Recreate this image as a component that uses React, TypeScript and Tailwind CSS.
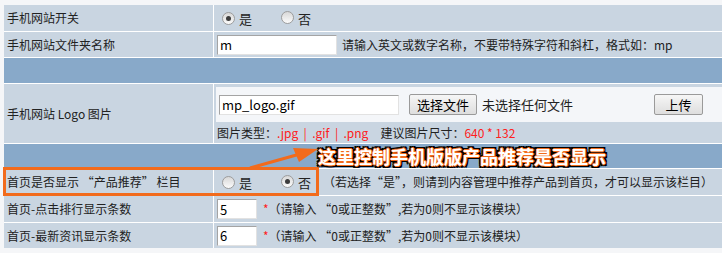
import React from "react"

function Radio({ checked }: { checked?: boolean }) {
  return (
    <span className="relative inline-block h-[13px] w-[13px] shrink-0 rounded-full border border-[#9c9c9c] bg-linear-to-b from-[#d8d8d8] to-[#fbfbfb]">
      {checked && <span className="absolute left-[3px] top-[3px] h-[5px] w-[5px] rounded-full bg-[#3c3c3c]" />}
    </span>
  )
}

function Field({ value, width }: { value: string; width: string }) {
  return (
    <span
      className={`flex h-[20px] items-center border border-[#a4a4a4] border-r-[#e2e2e2] border-b-[#e2e2e2] bg-white pl-[2px] text-[13px] leading-none text-black ${width}`}
    >
      {value}
    </span>
  )
}

function Btn({ children }: { children: React.ReactNode }) {
  return (
    <span className="flex h-[21px] items-center justify-center rounded-[2px] border border-[#9a9a9a] bg-linear-to-b from-[#f6f6f6] to-[#dedede] text-[13px] leading-none text-black">
      {children}
    </span>
  )
}

function Row({ label, h, children }: { label: React.ReactNode; h: string; children?: React.ReactNode }) {
  return (
    <div className={`flex gap-px ${h}`}>
      <div className="flex w-[209px] items-center bg-[#c9d5e1] pl-[3px]">{label}</div>
      <div className="flex min-w-0 flex-1 items-center whitespace-nowrap bg-[#c9d5e1]">{children}</div>
    </div>
  )
}

export default function App() {
  return (
    <div className="relative h-[253px] w-[722px] overflow-hidden bg-[#f5f6f8] pt-[5px] pl-[4px] font-['Noto_Sans_CJK_SC',sans-serif] text-[12px] leading-none text-[#222]">
      <div className="flex w-[718px] flex-col gap-px bg-white">
        <Row label="手机网站开关" h="h-[26px]">
          <div className="flex items-center pl-[8px]">
            <Radio checked />
            <span className="ml-[4px] text-[13px]">是</span>
            <span className="ml-[29px]"><Radio /></span>
            <span className="ml-[4px] text-[13px]">否</span>
          </div>
        </Row>
        <Row label="手机网站文件夹名称" h="h-[25px]">
          <div className="flex items-center pl-[3px]">
            <Field value="m" width="w-[120px]" />
            <span className="ml-[5px]">请输入英文或数字名称，不要带特殊字符和斜杠，格式如：mp</span>
          </div>
        </Row>
        <div className="h-[25px] bg-[#88a9c9]" />
        <Row label="手机网站 Logo 图片" h="h-[59px]">
          <div className="flex h-full w-full flex-col pl-[2px] pt-[3px]">
            <div className="flex h-[35px] items-center bg-[#f4f6f9] pl-[3px] pr-[19px]">
              <Field value="mp_logo.gif" width="w-[180px]" />
              <span className="ml-[10px] w-[68px]"><Btn>选择文件</Btn></span>
              <span className="ml-[5px] text-[13px]">未选择任何文件</span>
              <span className="ml-auto w-[49px]"><Btn>上传</Btn></span>
            </div>
            <div className="flex flex-1 items-center pl-[1px] text-[12px]">
              <span>图片类型：</span>
              <span className="text-[#ff2020]">.jpg&nbsp;&nbsp;|&nbsp;&nbsp;.gif&nbsp;&nbsp;|&nbsp;&nbsp;.png</span>
              <span className="ml-[12px]">建议图片尺寸：</span>
              <span className="text-[#ff2020]">640&nbsp;*&nbsp;132</span>
            </div>
          </div>
        </Row>
        <div className="h-[24px] bg-[#88a9c9]" />
        <Row label="首页是否显示 “产品推荐” 栏目" h="h-[26px]">
          <div className="flex items-center pl-[8px]">
            <Radio />
            <span className="ml-[4px] text-[13px]">是</span>
            <span className="ml-[29px]"><Radio checked /></span>
            <span className="ml-[4px] text-[13px]">否</span>
            <span className="ml-[12px]">（若选择“是”，则请到内容管理中推荐产品到首页，才可以显示该栏目）</span>
          </div>
        </Row>
        <Row label="首页-点击排行显示条数" h="h-[26px]">
          <div className="flex items-center pl-[3px]">
            <Field value="5" width="w-[40px]" />
            <span className="ml-[6px] text-[#ff2020]">*</span>
            <span>（请输入 “0或正整数”,若为0则不显示该模块）</span>
          </div>
        </Row>
        <Row label="首页-最新资讯显示条数" h="h-[25px]">
          <div className="flex items-center pl-[3px]">
            <Field value="6" width="w-[40px]" />
            <span className="ml-[6px] text-[#ff2020]">*</span>
            <span>（请输入 “0或正整数”,若为0则不显示该模块）</span>
          </div>
        </Row>
      </div>

      {/* annotation overlay */}
      <div className="absolute left-[3px] top-[167px] h-[29px] w-[316px] border-[3px] border-[#f26b1c]" />
      <svg className="absolute left-0 top-0" width="722" height="253" viewBox="0 0 722 253">
        <line x1="250" y1="168" x2="300" y2="154" stroke="#f26b1c" strokeWidth="3" />
        <polygon points="318,149 293,148 299,162" fill="#f26b1c" />
      </svg>
      <span className="absolute left-[318px] top-[145px] text-[18px] font-bold leading-[22px] text-white [text-shadow:1px_0_0_#f26b1c,-1px_0_0_#f26b1c,0_1px_0_#f26b1c,0_-1px_0_#f26b1c,2px_0_0_#000,-2px_0_0_#000,0_2px_0_#000,0_-2px_0_#000,2px_2px_0_#000,-2px_-2px_0_#000,2px_-2px_0_#000,-2px_2px_0_#000]">
        这里控制手机版版产品推荐是否显示
      </span>
    </div>
  )
}
